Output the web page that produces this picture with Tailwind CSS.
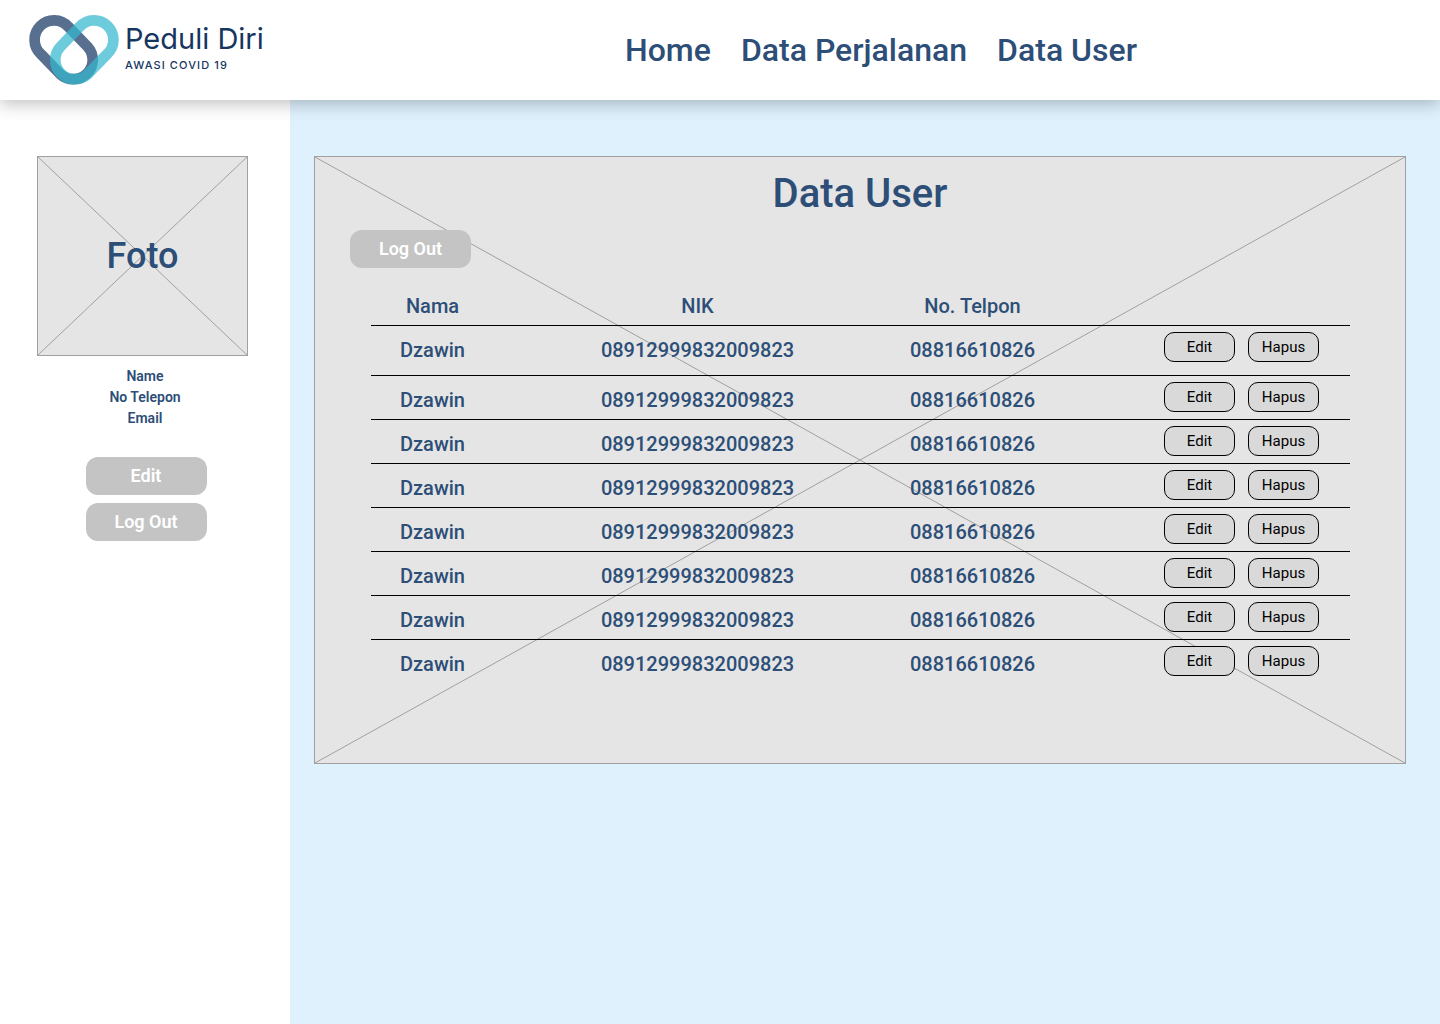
<!DOCTYPE html>
<html lang="id">
<head>
<meta charset="utf-8">
<meta name="viewport" content="width=device-width, initial-scale=1">
<title>Peduli Diri - Data User</title>
<script src="https://cdn.jsdelivr.net/npm/@tailwindcss/browser@4"></script>
</head>
<body class="flex min-h-screen flex-col bg-[#def1fd] font-['Roboto',sans-serif] font-medium text-[#2c4e77]">
  <header class="relative z-10 flex h-[100px] shrink-0 items-center bg-white shadow-[0_4px_16px_rgba(0,0,0,0.25)]">
    <a href="#" class="flex w-[625px] shrink-0 items-center gap-[6px] pl-[29px] text-[#15365f]">
      <svg class="h-[72px] w-[90px] shrink-0" viewBox="29 13.5 90 72" fill="none" stroke-width="10.7" aria-hidden="true">
        <path stroke="#586f8f" d="M68.4 26.3 A19.4 19.4 0 1 0 41 53.7 L60.3 73.7 A19.4 19.4 0 0 0 87.7 46.3Z"/>
        <path stroke="#35b9cf" stroke-opacity=".72" d="M79.6 26.3 A19.4 19.4 0 1 1 107 53.7 L87.7 73.7 A19.4 19.4 0 0 1 60.3 46.3Z"/>
      </svg>
      <span class="flex flex-col gap-0.5 pb-1">
        <span class="font-['Inter',sans-serif] text-[29px] leading-8 font-normal">Peduli Diri</span>
        <span class="font-['Inter',sans-serif] text-[11px] leading-4 font-medium tracking-widest">AWASI COVID 19</span>
      </span>
    </a>
    <nav class="flex gap-[30px] text-[32px] leading-10">
      <a href="#">Home</a>
      <a href="#">Data Perjalanan</a>
      <a href="#">Data User</a>
    </nav>
  </header>

  <div class="flex flex-1">
    <aside class="flex w-[290px] shrink-0 flex-col items-center bg-white pt-14">
      <div class="relative ml-[37px] flex h-[200px] w-[211px] items-center justify-center self-start border border-[#a0a0a0] bg-[#e5e5e5]">
        <svg class="absolute inset-0 size-full" viewBox="0 0 100 100" preserveAspectRatio="none" stroke="#a0a0a0" aria-hidden="true">
          <path vector-effect="non-scaling-stroke" d="M0 0 100 100M100 0 0 100"/>
        </svg>
        <span class="relative text-4xl">Foto</span>
      </div>
      <ul class="mt-[10px] text-center text-sm leading-[21px] font-semibold">
        <li>Name</li>
        <li>No Telepon</li>
        <li>Email</li>
      </ul>
      <div class="mt-7 flex flex-col gap-2 pl-[2px] text-lg font-semibold text-white">
        <button type="button" class="h-[38px] w-[121px] rounded-xl bg-[#c4c4c4]">Edit</button>
        <button type="button" class="h-[38px] w-[121px] rounded-xl bg-[#c4c4c4]">Log Out</button>
      </div>
    </aside>

    <main class="flex-1 pt-14 pr-[34px] pl-6">
      <section class="relative border border-[#a0a0a0] bg-[#e5e5e5] pb-20">
        <svg class="absolute inset-0 size-full" viewBox="0 0 100 100" preserveAspectRatio="none" stroke="#a0a0a0" aria-hidden="true">
          <path vector-effect="non-scaling-stroke" d="M0 0 100 100M100 0 0 100"/>
        </svg>
        <div class="relative">
          <h1 class="pt-[13px] text-center text-[40px] leading-12">Data User</h1>
          <button type="button" class="mt-3 ml-[35px] block h-[38px] w-[121px] rounded-xl bg-[#c4c4c4] text-lg font-semibold text-white">Log Out</button>
          <div class="mt-[26px] pr-[55px] pl-14">
            <table class="w-full table-fixed border-collapse text-center text-xl leading-6">
              <colgroup>
                <col class="w-[123px]"><col><col class="w-[143px]"><col class="w-[306px]">
              </colgroup>
              <thead>
                <tr class="h-[31px] border-b border-black align-top">
                  <th class="font-medium">Nama</th><th class="font-medium">NIK</th><th class="font-medium">No. Telpon</th><td></td>
                </tr>
              </thead>
              <tbody id="rows"></tbody>
            </table>
          </div>
        </div>
      </section>
    </main>
  </div>

  <script>
    const users = Array.from({ length: 8 }, () => ["Dzawin", "08912999832009823", "08816610826"]);
    const button = (label) => `<button type="button" class="h-[30px] w-[71px] rounded-[10px] border border-black bg-[#d9d9d9]">${label}</button>`;
    document.getElementById("rows").innerHTML = users.map((user) => `
      <tr class="h-11 border-b border-black align-top first:h-[50px] last:border-0">
        ${user.map((value) => `<td class="pt-3">${value}</td>`).join("")}
        <td class="pt-[6px] pr-[31px]"><div class="flex justify-end gap-[13px] text-[15px] font-normal text-black">${button("Edit")}${button("Hapus")}</div></td>
      </tr>`).join("");
  </script>
</body>
</html>
